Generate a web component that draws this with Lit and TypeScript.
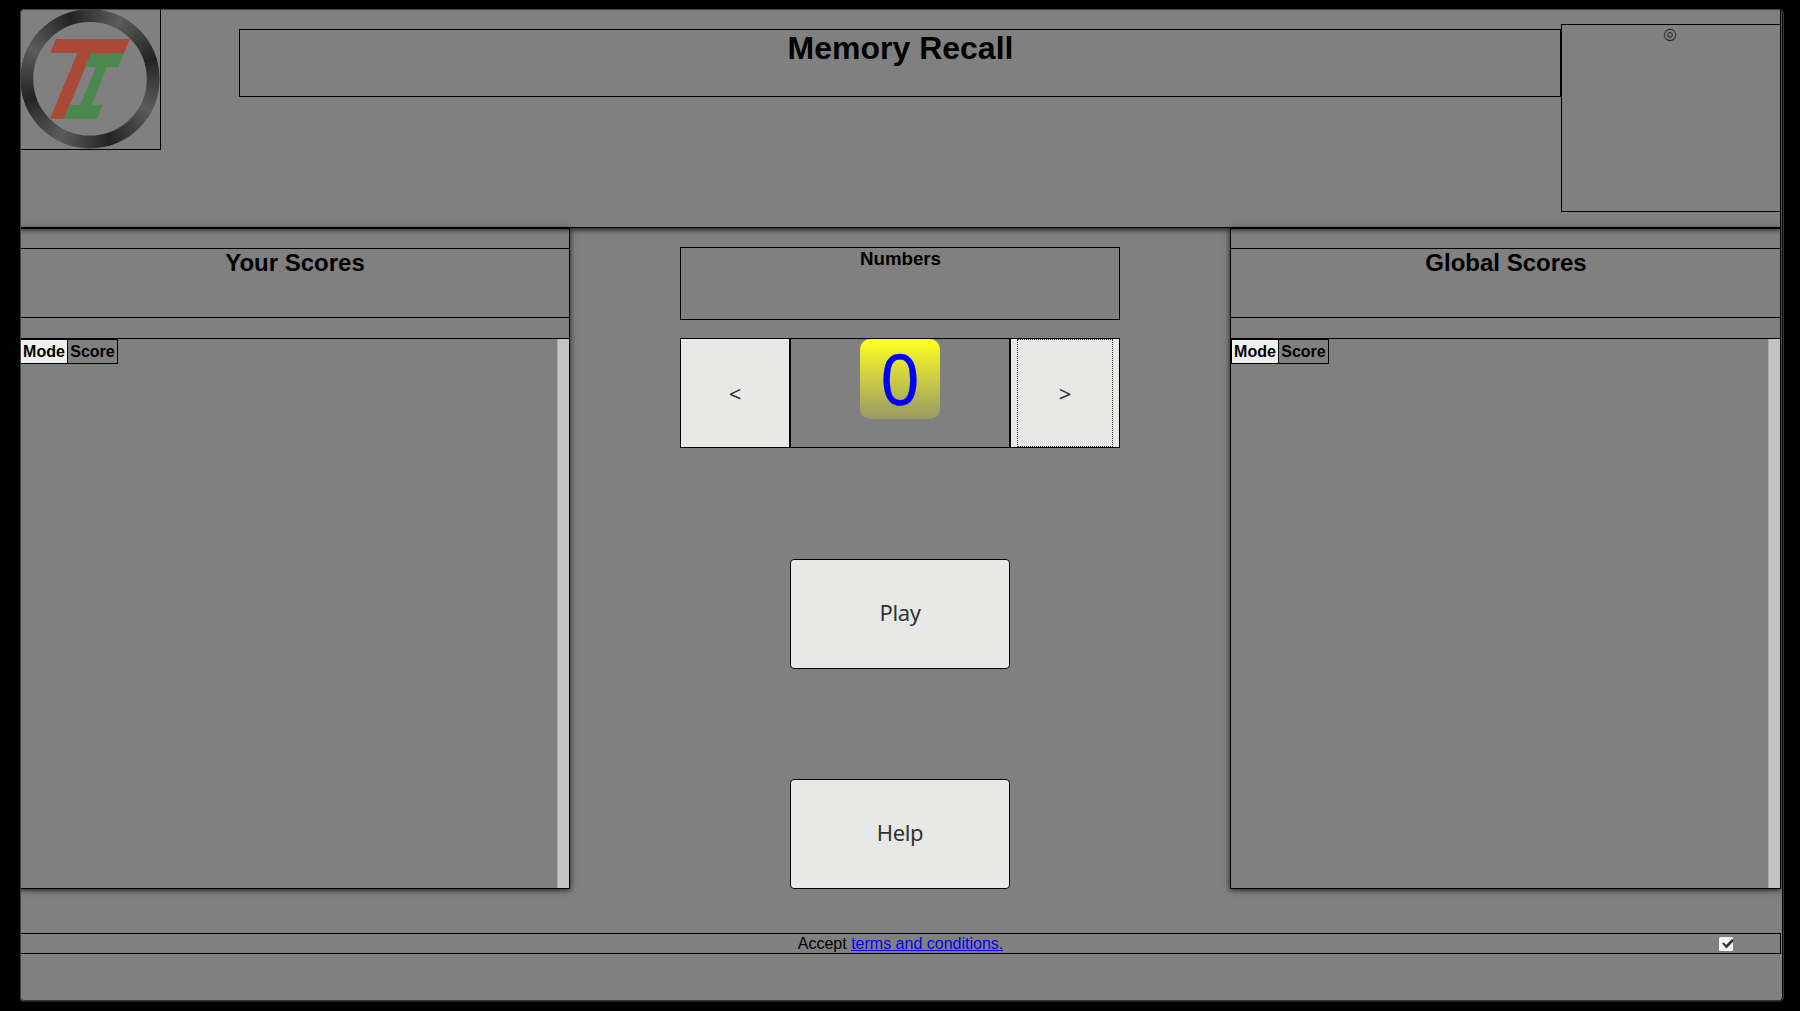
import { LitElement, html, css } from "lit";
import { customElement, property } from "lit/decorators.js";

@customElement("score-panel")
class ScorePanel extends LitElement {
  @property() heading = "";

  static styles = css`
    :host {
      display: flex;
      flex-direction: column;
      box-sizing: border-box;
      height: 661px;
      padding-top: 19px;
      border: 1px solid #000;
      box-shadow: 0 1px 6px rgba(0, 0, 0, 0.8);
    }
    h2 {
      box-sizing: border-box;
      height: 70px;
      margin: 0 0 20px;
      padding-left: 1px;
      border: solid #000;
      border-width: 1px 0;
      font-size: 24px;
      line-height: 28px;
      text-align: center;
    }
    .list {
      flex: 1;
      display: flex;
      justify-content: space-between;
      align-items: flex-start;
      border-top: 1px solid #000;
    }
    .cols {
      display: flex;
      box-sizing: border-box;
      width: 98px;
      height: 25px;
      border: 1px solid #000;
      font-weight: bold;
      font-size: 16px;
      line-height: 23px;
    }
    .cols span {
      flex: 1;
      text-align: center;
    }
    .cols .mode {
      flex: 0 0 46px;
      background: #f0f0f0;
      border-right: 1px solid #000;
    }
    .track {
      box-sizing: border-box;
      width: 12px;
      height: 100%;
      background: #c2c4c3;
      border-left: 1px solid #a9abaa;
    }
  `;

  render() {
    return html`
      <h2>${this.heading}</h2>
      <div class="list">
        <div class="cols"><span class="mode">Mode</span><span>Score</span></div>
        <div class="track"></div>
      </div>
    `;
  }
}

@customElement("app-root")
class AppRoot extends LitElement {
  static styles = css`
    :host {
      display: block;
      box-sizing: border-box;
      height: 1011px;
      padding: 9px 16px 0 20px;
      overflow: hidden;
      background: #000;
      color: #000;
      font-family: "Liberation Sans", Arial, sans-serif;
      font-size: 16px;
    }
    .frame {
      box-sizing: border-box;
      height: 993px;
      border: 1px solid #444;
      border-right-color: #3a3a3a;
      border-bottom-color: #222;
      border-radius: 4px 5px 5px 4px;
      background: #808080;
      box-shadow: inset -1px 0 #000, inset 0 -1px #333;
      overflow: hidden;
    }
    .page {
      width: 1762px;
      margin: -1px 0 0 -2px;
    }
    header {
      display: flex;
      align-items: flex-start;
      box-sizing: border-box;
      height: 219px;
      border: solid #000;
      border-width: 0 1px 1px;
      box-shadow: 0 2px 5px rgba(0, 0, 0, 0.75);
    }
    .logo {
      box-sizing: border-box;
      width: 141px;
      height: 141px;
      border: solid #000;
      border-width: 0 1px 1px 0;
    }
    .logo svg {
      display: block;
      width: 140px;
      height: 140px;
    }
    .ring {
      width: 140px;
      height: 140px;
      border-radius: 50%;
      background: conic-gradient(
        #3a3c3b 0deg, #5b5c5b 27deg, #222424 72deg, #5b5c5b 117deg, #222424 162deg,
        #5b5c5b 207deg, #222424 252deg, #5b5c5b 297deg, #222424 342deg, #3a3c3b 360deg
      );
    }
    h1 {
      box-sizing: border-box;
      width: 1322px;
      height: 68px;
      margin: 20px 0 0 78px;
      padding-left: 1px;
      border: 1px solid #000;
      font-size: 32px;
      line-height: 37px;
      text-align: center;
    }
    nav {
      flex: 1;
      box-sizing: border-box;
      height: 188px;
      margin-top: 15px;
      padding-right: 2px;
      border: solid #000;
      border-width: 1px 0 1px 1px;
      text-align: center;
      font: 16px/17px "DejaVu Sans", sans-serif;
      color: #2a2a2a;
    }
    main {
      display: grid;
      grid-template-columns: 551px 440px 551px;
      justify-content: space-between;
      height: 705px;
    }
    .center {
      display: flex;
      flex-direction: column;
      align-items: center;
      padding-top: 19px;
    }
    h3 {
      box-sizing: border-box;
      width: 440px;
      height: 73px;
      margin: 0 0 18px;
      padding-left: 1px;
      border: 1px solid #000;
      font-size: 18.72px;
      line-height: 22px;
      text-align: center;
    }
    .picker {
      display: grid;
      grid-template-columns: 110px 220px 110px;
      height: 110px;
      margin-bottom: 111px;
    }
    .tile {
      box-sizing: border-box;
      border: 1px solid #000;
      display: flex;
      justify-content: center;
      align-items: flex-start;
    }
    .digit {
      width: 80px;
      height: 80px;
      border-radius: 10px;
      background: linear-gradient(#ffff22, #999966);
      color: #00f;
      font: 69px/78px "Noto Sans", sans-serif;
      -webkit-text-stroke: 0.4px #00f;
      text-align: center;
    }
    button {
      box-sizing: border-box;
      display: flex;
      align-items: center;
      justify-content: center;
      height: 110px;
      margin: 0;
      padding: 0 6px;
      border: 1px solid #000;
      border-radius: 0;
      background: #e8e8e6;
      color: #2e3436;
      font: 22px/28px "Noto Sans", sans-serif;
    }
    .focus {
      display: flex;
      align-items: center;
      justify-content: center;
      box-sizing: border-box;
      width: 96px;
      height: 108px;
      border: 1px dotted #2e3436;
    }
    .action {
      width: 220px;
      padding-bottom: 4px;
      border-radius: 4px;
      letter-spacing: -0.4px;
    }
    .help {
      margin-top: 110px;
    }
    footer {
      display: flex;
      align-items: center;
      box-sizing: border-box;
      height: 21px;
      border: 1px solid #000;
      line-height: 19px;
    }
    .terms {
      flex: 1;
      padding-left: 62px;
      text-align: center;
    }
    a {
      color: #0000ee;
    }
    .check {
      width: 14px;
      height: 14px;
      margin: 1px 47px 0 0;
      overflow: visible;
    }
  `;

  render() {
    return html`
      <div class="frame">
        <div class="page">
          <header>
            <div class="logo">
              <svg viewBox="20 9 140 140">
                <defs>
                  <mask id="band">
                    <circle cx="90" cy="78.8" r="63.2" fill="none" stroke="#fff" stroke-width="12.8" />
                  </mask>
                </defs>
                <foreignObject x="20" y="9" width="140" height="140" mask="url(#band)">
                  <div class="ring"></div>
                </foreignObject>
                <path fill="#a94a38" d="M56 39H129.7L124.3 53H91.3L64 118.7H50L77.3 53H50Z" />
                <path fill="#4b8850" d="M91.3 53H124.3L118.3 67.3H107L91.7 104.7H102.7L97 118.7H64L70 104.7H80.3L96 67.3H85.3Z" />
              </svg>
            </div>
            <h1>Memory Recall</h1>
            <nav>◎</nav>
          </header>
          <main>
            <score-panel heading="Your Scores"></score-panel>
            <section class="center">
              <h3>Numbers</h3>
              <div class="picker">
                <button>&lt;</button>
                <div class="tile"><div class="digit">0</div></div>
                <button><span class="focus">&gt;</span></button>
              </div>
              <button class="action">Play</button>
              <button class="action help">Help</button>
            </section>
            <score-panel heading="Global Scores"></score-panel>
          </main>
          <footer>
            <div class="terms">Accept <a href="#">terms and conditions.</a></div>
            <svg class="check" viewBox="0 0 14 14">
              <rect width="14" height="14" rx="1.5" fill="#f4f4f2" />
              <path d="M3 6.2 L5 5.6 L7 8 L13 2 L14 2.6 V4.8 L7.4 11.6 Z" fill="#2e3436" />
            </svg>
          </footer>
        </div>
      </div>
    `;
  }
}
